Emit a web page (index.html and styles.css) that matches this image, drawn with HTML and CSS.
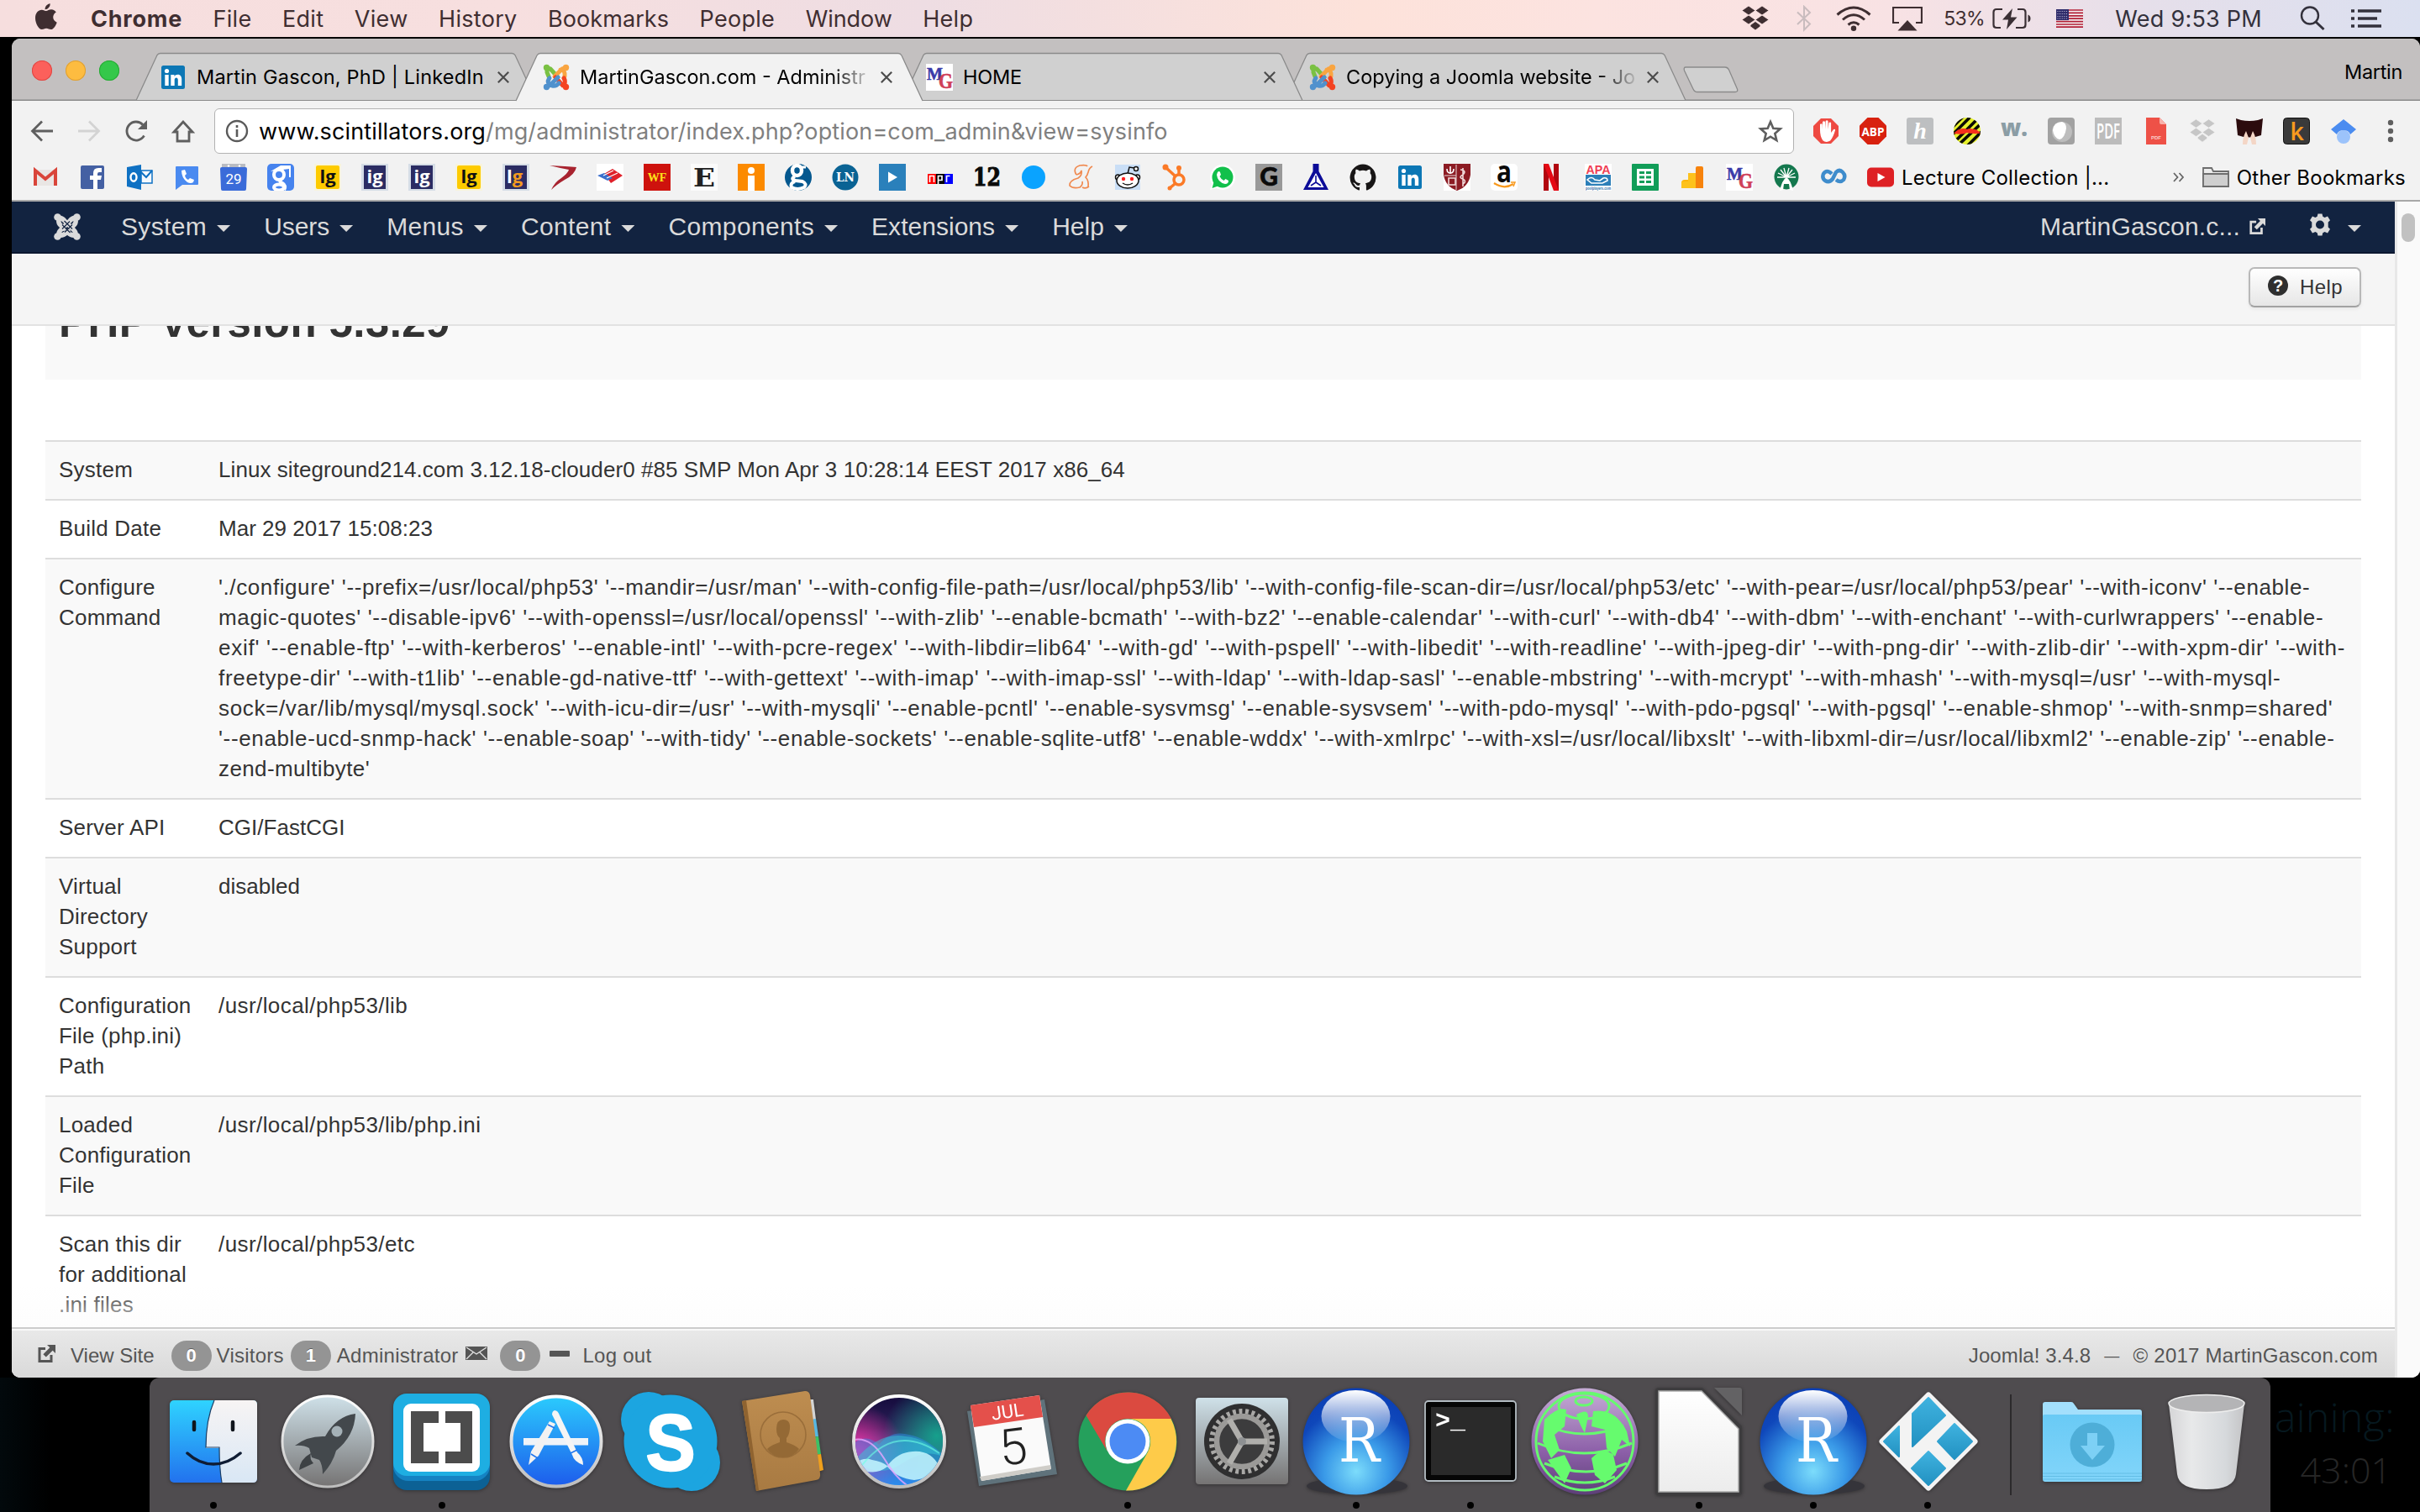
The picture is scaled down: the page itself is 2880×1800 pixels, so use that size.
FILE: index.html
```html
<!DOCTYPE html>
<html lang="en">
<head>
<meta charset="utf-8">
<title>MartinGascon.com - Administration</title>
<link rel="stylesheet" href="styles.css">
</head>
<body>
<svg width="0" height="0" class="defs" aria-hidden="true">
  <defs>
    <linearGradient id="gFinder" x1="0" y1="0" x2="0" y2="1"><stop offset="0" stop-color="#2fd3ff"/><stop offset="1" stop-color="#2272ee"/></linearGradient>
    <linearGradient id="gFace" x1="0" y1="0" x2="0" y2="1"><stop offset="0" stop-color="#f7f4f4"/><stop offset="1" stop-color="#d9e7f5"/></linearGradient>
    <linearGradient id="gSteel" x1="0" y1="0" x2="0" y2="1"><stop offset="0" stop-color="#cfe1e9"/><stop offset="1" stop-color="#757373"/></linearGradient>
    <linearGradient id="gRim" x1="0" y1="0" x2="0" y2="1"><stop offset="0" stop-color="#ffffff"/><stop offset="1" stop-color="#bdbdbd"/></linearGradient>
    <linearGradient id="gStore" x1="0" y1="0" x2="0" y2="1"><stop offset="0" stop-color="#2bcbfd"/><stop offset="1" stop-color="#1d5cec"/></linearGradient>
    <linearGradient id="gBook" x1="0" y1="0" x2="0" y2="1"><stop offset="0" stop-color="#be8d50"/><stop offset="1" stop-color="#a87a42"/></linearGradient>
    <linearGradient id="gSiri" x1="0" y1="0" x2="0" y2="1"><stop offset="0" stop-color="#140a3c"/><stop offset=".35" stop-color="#2b2058"/><stop offset=".6" stop-color="#3a4f8f"/><stop offset="1" stop-color="#2a8cf0"/></linearGradient>
    <radialGradient id="gPink" cx=".1" cy=".6" r=".45"><stop offset="0" stop-color="#ff2fa8"/><stop offset="1" stop-color="#ff2fa8" stop-opacity="0"/></radialGradient>
    <radialGradient id="gTeal" cx=".85" cy=".45" r=".5"><stop offset="0" stop-color="#16a08c"/><stop offset="1" stop-color="#16a08c" stop-opacity="0"/></radialGradient>
    <radialGradient id="gR" cx=".5" cy=".78" r=".75"><stop offset="0" stop-color="#7cdcfb"/><stop offset=".4" stop-color="#3a9ae8"/><stop offset=".8" stop-color="#0f47ba"/><stop offset="1" stop-color="#0b3fb5"/></radialGradient>
    <linearGradient id="gShine" x1="0" y1="0" x2="0" y2="1"><stop offset="0" stop-color="#fff"/><stop offset="1" stop-color="#fff" stop-opacity=".05"/></linearGradient>
    <linearGradient id="gGlobe" x1="0" y1="0" x2="0" y2="1"><stop offset="0" stop-color="#c6add6"/><stop offset=".6" stop-color="#8c5fa8"/><stop offset="1" stop-color="#5d3f78"/></linearGradient>
    <linearGradient id="gPage" x1="0" y1="0" x2="0" y2="1"><stop offset="0" stop-color="#ffffff"/><stop offset="1" stop-color="#ececec"/></linearGradient>
    <linearGradient id="gKodi" x1="0" y1="0" x2="0" y2="1"><stop offset="0" stop-color="#3fb2df"/><stop offset="1" stop-color="#2291c1"/></linearGradient>
    <linearGradient id="gFolder" x1="0" y1="0" x2="0" y2="1"><stop offset="0" stop-color="#69caf5"/><stop offset="1" stop-color="#82d5fa"/></linearGradient>
    <linearGradient id="gTrash" x1="0" y1="0" x2="1" y2="0"><stop offset="0" stop-color="#d5d5d7"/><stop offset=".3" stop-color="#e8e9ea"/><stop offset=".75" stop-color="#d6d9dc"/><stop offset="1" stop-color="#c4c4c6"/></linearGradient>
    <symbol id="joomla" viewBox="0 0 32 32">
      <g fill="none" stroke-width="5" stroke-linecap="round" stroke-linejoin="round">
        <path d="M5 5l4 1 9 10M5 4v6l2 5" stroke="#7ac143"/>
        <path d="M27 5l-4 1-9 9M21 7q6 0 5 8" stroke="#f9a541"/>
        <path d="M27 27l-3-1-9-10M26 24q1-4-1-7" stroke="#f44321"/>
        <path d="M5 27l3-1 10-10M8 17q-3 3-1 7M11 26q5 1 8-3" stroke="#5091cd"/>
      </g>
      <circle cx="4.500" cy="4.500" r="3.700" fill="#7ac143"/><circle cx="27.500" cy="4.500" r="3.700" fill="#f9a541"/><circle cx="27.500" cy="27.500" r="3.700" fill="#f44321"/><circle cx="4.500" cy="27.500" r="3.700" fill="#5091cd"/>
    </symbol>
    <symbol id="mg" viewBox="0 0 32 32"><rect width="32" height="32" fill="#fff"/><text x="1" y="19" font-family="Liberation Serif" font-weight="700" font-size="22" fill="#3a3aa8" stroke="#3a3aa8" stroke-width=".6" textLength="19" lengthAdjust="spacingAndGlyphs">M</text><text x="15" y="29" font-family="Liberation Serif" font-weight="700" font-size="25" fill="#cf4058" stroke="#cf4058" stroke-width=".6" textLength="17" lengthAdjust="spacingAndGlyphs">G</text></symbol>
    <symbol id="linkedin" viewBox="0 0 32 32"><rect x="2" y="2" width="28" height="28" rx="2.500" fill="#0c77b5"/><circle cx="8.500" cy="8.500" r="2.600" fill="#fff"/><path d="M6.300 13h4.400v13H6.300zM13.300 13h4.200v1.900c2-3.400 8.700-3.200 8.700 3.100v8h-4.400v-7c0-3.600-4.100-3.300-4.100 0v7h-4.400z" fill="#fff"/></symbol>
    <symbol id="dropbox" viewBox="0 0 34 32"><path d="M9 1l8 5.500L9 12 1 6.500zM25 1l8 5.500-8 5.500-8-5.500zM9 12l8 5.500L9 23l-8-5.500zM25 12l8 5.500-8 5.500-8-5.500zM17 19.500l6 4.300v1.700l-6 4.500-6-4.500v-1.700z" stroke="var(--gap)" stroke-width=".8"/></symbol>
    <symbol id="extlink" viewBox="0 0 22 22"><path d="M10 4.500H3v15h14V12" fill="none" stroke="currentColor" stroke-width="3"/><path d="M12 0h10v10l-3.300-3.300-7.900 7.900-3.400-3.400L15.300 3.300z" fill="currentColor"/></symbol>
    <symbol id="rstudio" viewBox="0 0 128 128"><ellipse cx="65" cy="117" rx="60" ry="10" fill="#35343a"/><circle cx="64" cy="64" r="63.500" fill="url(#gR)"/><ellipse cx="63.500" cy="34" rx="41" ry="31" fill="url(#gShine)"/><text x="43" y="88" font-family="DejaVu Serif" font-size="73" fill="#fff" textLength="49" lengthAdjust="spacingAndGlyphs">R</text></symbol>
    <symbol id="ig" viewBox="0 0 32 32"><rect width="32" height="32" fill="#d5dde6"/><rect x="3" y="2" width="26" height="28" fill="#2b2c63"/><text x="16" y="23" text-anchor="middle" font-family="Open Sans" font-weight="700" font-size="22" fill="#fff">ig</text></symbol>
    <symbol id="igy" viewBox="0 0 32 32"><rect width="32" height="32" fill="#f8f4dc"/><rect x="2" y="2" width="28" height="28" rx="2" fill="#fecb00"/><text x="16" y="23" text-anchor="middle" font-family="Open Sans" font-weight="700" font-size="22" fill="#111">lg</text></symbol>
  </defs>
</svg>

<header class="menubar">
  <svg class="apple" viewBox="0 0 28 34"><path d="M19 0c.4 4-3 7.600-6.500 7.500C12.200 3.800 15.500.4 19 0zM14 9.500c1.700 0 3.500-1.800 6.500-1.800 2.700 0 4.900 1.500 6.200 3.500-5.700 3.400-4.700 10.800 1 13-1.500 4.500-4.600 9-7.700 9-2.500 0-3-1.400-5.800-1.400s-3.500 1.400-5.800 1.400C4.600 33.200 0 25.500 0 18.500 0 11.700 4 8 8.200 8c2.600 0 4.400 1.500 5.800 1.500z"/></svg>
  <nav class="menus"><b class="m1">Chrome</b><span>File</span><span>Edit</span><span>View</span><span>History</span><span class="m6">Bookmarks</span><span>People</span><span class="m8">Window</span><span>Help</span></nav>
  <div class="status-items">
    <svg class="i-drop" viewBox="0 0 34 32"><use href="#dropbox"/></svg>
    <svg class="i-bt" viewBox="0 0 18 32"><path d="M1 8.500l15 14-7 7V2l7 7L1 23" fill="none" stroke="#c9bcbe" stroke-width="2"/></svg>
    <svg class="i-wifi" viewBox="0 0 42 30"><g fill="none" stroke="#3e2e31" stroke-width="3"><path d="M1.500 10.500q19.500-17 39 0"/><path d="M8 16.500q13-11.500 26 0"/><path d="M14.500 22.500q6.500-5.500 13 0"/></g><circle cx="21" cy="26.800" r="3.200" fill="#3e2e31"/></svg>
    <svg class="i-air" viewBox="0 0 36 29"><path d="M8 19H1V1h34v18h-7" fill="none" stroke="#3e2e31" stroke-width="2.200"/><path d="M18 16l11.500 12.500h-23z" fill="#3e2e31"/></svg>
    <span class="battery-level">53%</span>
    <svg class="i-bat" viewBox="0 0 46 28"><path d="M12 3H5Q1.500 3 1.500 6.500v15Q1.500 25 5 25h5M30 3h6q3.500 0 3.500 3.500v15q0 3.500-3.500 3.500h-8" fill="none" stroke="#3a2f34" stroke-width="2.200"/><path d="M42.500 9.500q3 1 3 4.500t-3 4.500z" fill="#3a2f34"/><path d="M24 2l-12 13.500h7L17 27l12.500-14.500h-7.500z" fill="#3a2f34"/></svg>
    <svg class="i-flag" viewBox="0 0 32 22"><rect width="32" height="22" fill="#f3eef0"/><path d="M0 1h32M0 4.400h32M0 7.800h32M0 11.200h32M0 14.600h32M0 18h32M0 21.200h32" stroke="#b21f36" stroke-width="1.700"/><rect width="15" height="13" fill="#2f2c6b"/><path d="M1.500 2.500h13M1.500 5.500h13M1.500 8.500h13M1.500 11h13" stroke="#c9c6dd" stroke-width="1" stroke-dasharray="1 1.600"/></svg>
    <span class="clock">Wed 9:53 PM</span>
    <svg class="i-find" viewBox="0 0 30 30"><circle cx="12" cy="11.500" r="10" fill="none" stroke="#33313c" stroke-width="2.400"/><path d="M19 19l9.500 9" stroke="#33313c" stroke-width="3"/></svg>
    <svg class="i-list" viewBox="0 0 36 22"><path d="M0 2h4M0 11h4M0 20h4M8 2h28M8 11h23M8 20h28" stroke="#33313c" stroke-width="3.600"/></svg>
  </div>
</header>

<main class="window">
  <div class="tabstrip">
    <div class="lights"><i class="red"></i><i class="yellow"></i><i class="green"></i></div>
    <div class="tabs">
      <div class="tab"><svg class="shape" viewBox="0 0 484 57"><path d="M0 57L25 3Q26.500.5 29 .5H455Q457.500.5 459 3L484 57"/></svg><svg class="fav"><use href="#linkedin"/></svg><span class="label t1">Martin Gascon, PhD | LinkedIn</span><svg class="close" viewBox="0 0 14 14"><path d="M.8.800l12.400 12.400M13.200.800L.8 13.200"/></svg></div>
      <div class="tab active"><svg class="shape" viewBox="0 0 484 57"><path d="M0 57L25 3Q26.500.5 29 .5H455Q457.500.5 459 3L484 57"/></svg><svg class="fav"><use href="#joomla"/></svg><span class="label fade">MartinGascon.com - Administr</span><svg class="close" viewBox="0 0 14 14"><path d="M.8.800l12.400 12.400M13.200.800L.8 13.200"/></svg></div>
      <div class="tab third"><svg class="shape" viewBox="0 0 484 57"><path d="M0 57L25 3Q26.500.5 29 .5H455Q457.500.5 459 3L484 57"/></svg><svg class="fav"><use href="#mg"/></svg><span class="label t3">HOME</span><svg class="close" viewBox="0 0 14 14"><path d="M.8.800l12.400 12.400M13.200.800L.8 13.200"/></svg></div>
      <div class="tab"><svg class="shape" viewBox="0 0 484 57"><path d="M0 57L25 3Q26.500.5 29 .5H455Q457.500.5 459 3L484 57"/></svg><svg class="fav"><use href="#joomla"/></svg><span class="label fade">Copying a Joomla website - Jo</span><svg class="close" viewBox="0 0 14 14"><path d="M.8.800l12.400 12.400M13.200.800L.8 13.200"/></svg></div>
    </div>
    <svg class="newtab" viewBox="0 0 66 32"><path d="M3 1H50Q53 1 54.500 4L64.500 27Q65.500 30.500 62 30.500H17Q13.500 30.500 12 27L1.500 5Q.5 1 3 1z"/></svg>
    <span class="user">Martin</span>
  </div>

  <div class="toolbar">
    <svg class="tb back" viewBox="0 0 28 26"><path d="M14 1.500L2.500 13 14 24.500M2.500 13H27" fill="none" stroke="#5f5f5f" stroke-width="2.800"/></svg>
    <svg class="tb fwd" viewBox="0 0 28 26"><path d="M14 1.500L25.500 13 14 24.500M25.500 13H1" fill="none" stroke="#d3d3d3" stroke-width="2.800"/></svg>
    <svg class="tb reload" viewBox="0 0 28 28"><path d="M23.500 19.500A11 11 0 1 1 22 6.500" fill="none" stroke="#5f5f5f" stroke-width="2.800"/><path d="M27 1v11H16z" fill="#5f5f5f"/></svg>
    <svg class="tb home" viewBox="0 0 28 28"><path d="M14 3L3 15h4v11h14V15h4z" fill="none" stroke="#5f5f5f" stroke-width="2.800"/></svg>
    <div class="omnibox">
      <svg class="info" viewBox="0 0 28 28"><circle cx="14" cy="14" r="12" fill="none" stroke="#5a5a5a" stroke-width="2.400"/><path d="M14 12v9M14 7v3" stroke="#5a5a5a" stroke-width="2.600"/></svg>
      <div class="url"><span class="host">www.scintillators.org</span><span class="path">/mg/administrator/index.php?option=com_admin&amp;view=sysinfo</span></div>
      <svg class="star" viewBox="0 0 30 28"><path d="M15 3l3.300 7.700 8.400.7-6.400 5.500 2 8.200-7.300-4.400-7.300 4.400 2-8.200-6.400-5.500 8.400-.7z" fill="none" stroke="#5f5f5f" stroke-width="2.600"/></svg>
    </div>
    <div class="exts">
      <svg viewBox="0 0 32 32"><path d="M10 1h12l9 9v12l-9 9H10l-9-9V10z" fill="#ee4a42"/><path d="M9 15V8q1.500-1.500 2.500 0v6l.5-9q1.500-1.500 3 0v9l.7-10q1.500-1.300 2.800 0V14l1-8q1.500-1.200 2.600 0V18l3-4q2-.8 2 .7-2.500 9-6 12.800-5 3-9-.5Q9 22 9 15z" fill="#fff"/></svg>
      <svg viewBox="0 0 32 32"><path d="M9.500 0h13l9.500 9.500v13L22.500 32h-13L0 22.500v-13z" fill="#d8210f"/><text x="16" y="21.500" text-anchor="middle" font-family="Open Sans" font-weight="700" font-size="15" textLength="27" lengthAdjust="spacingAndGlyphs" fill="#fff">ABP</text></svg>
      <svg viewBox="0 0 32 32"><rect width="32" height="32" rx="3" fill="#bdbfc1"/><text x="16" y="25" text-anchor="middle" font-family="Liberation Serif" font-style="italic" font-weight="700" font-size="28" fill="#fff">h</text></svg>
      <svg viewBox="0 0 32 32"><clipPath id="cb"><circle cx="16" cy="16" r="16"/></clipPath><g clip-path="url(#cb)"><rect width="32" height="32" fill="#e6f02c"/><path d="M-4 14L14-4M-2 21L22-3M4 26L30 0M2 36L36 4M12 38L38 12M20 38L40 20" stroke="#0b0b05" stroke-width="3.600"/><path d="M0 19q5-6 11-6 3-.5 5 1 3-1.500 6-.5 6 0 10 5-5 1-8 .5-5 0-8-1-5 3-16 1z" fill="#f7301d"/></g></svg>
      <svg viewBox="0 0 32 32"><text x="0" y="22" font-family="Open Sans" font-weight="800" font-size="28" textLength="32" lengthAdjust="spacingAndGlyphs" fill="#8b9da5">w.</text></svg>
      <svg viewBox="0 0 32 32"><rect width="32" height="32" rx="4" fill="#a2a2a2"/><circle cx="17" cy="17" r="12" fill="#bdbdbd"/><path d="M6 15q1-10 11-10 5 1 5 8-2 12-8 13-7-2-8-11z" fill="#fff"/></svg>
      <svg viewBox="0 0 32 32"><rect width="32" height="32" fill="#bcbcbc"/><text x="16" y="25" text-anchor="middle" font-family="Open Sans" font-weight="600" font-size="25" textLength="28" lengthAdjust="spacingAndGlyphs" fill="#fff">PDF</text></svg>
      <svg viewBox="0 0 32 32"><path d="M5 0h16l8 8v24H5z" fill="#ee5147"/><path d="M21 0l8 8h-6q-2 0-2-2z" fill="#f9b1aa"/><text x="17" y="26" text-anchor="middle" font-family="Liberation Sans" font-weight="700" font-size="6" fill="#fbd0cc">PDF</text></svg>
      <svg viewBox="0 0 34 32" class="e-drop"><use href="#dropbox"/></svg>
      <svg viewBox="0 0 32 32"><path d="M0 1l6 2q10 2 20 0l6-2-2 20q-14 5-28 0z" fill="#2b0b0d"/><path d="M8 32q0-8 3-14l1-2 3 8-2 8zM24 32q0-8-3-14l-1-2-3 8 2 8z" fill="#f4d6c6"/></svg>
      <svg viewBox="0 0 32 32"><rect x=".5" y=".5" width="31" height="31" rx="4" fill="#3a3a3a" stroke="#111"/><text x="16.500" y="27" text-anchor="middle" font-family="Open Sans" font-weight="600" font-size="29" fill="#f79a1e">k</text></svg>
      <svg viewBox="0 0 32 32"><circle cx="16" cy="23" r="8" fill="#9cc3fb"/><path d="M16 2l15 12-7 6q-2-5-8-5t-8 5l-7-6z" fill="#4b8cf0"/></svg>
      <svg viewBox="0 0 32 32"><g fill="#5f5f5f"><circle cx="16" cy="6" r="3.200"/><circle cx="16" cy="16" r="3.200"/><circle cx="16" cy="26" r="3.200"/></g></svg>
    </div>
  </div>

  <div class="bookmarks">
    <svg viewBox="0 0 32 32"><path d="M4 7h24v19H4z" fill="#e9e6e4"/><path d="M4 26V8l12 10L28 8v18" fill="none" stroke="#d9453a" stroke-width="4"/></svg>
    <svg viewBox="0 0 32 32"><rect x="2" y="2" width="28" height="28" rx="2" fill="#4460a3"/><path d="M17 30V19h-4v-5h4v-3q0-6 6-6h4v5h-3q-2 0-2 2v2h5l-1 5h-4v11z" fill="#fff"/></svg>
    <svg viewBox="0 0 32 32"><path d="M1 4l17-3v30L1 27z" fill="#0f71c3"/><rect x="18" y="8" width="13" height="15" fill="#f5f9fd" stroke="#0f71c3" stroke-width="1.500"/><path d="M18 10l6 6 7-8" fill="none" stroke="#0f71c3" stroke-width="2"/><ellipse cx="9" cy="16" rx="3.500" ry="4.700" fill="none" stroke="#fff" stroke-width="2.400"/></svg>
    <svg viewBox="0 0 32 32"><path d="M4 3h25q1 0 1 1v20q0 1-1 1H11l-8 6V4q0-1 1-1z" fill="#4a8af0"/><path d="M10 8l4-1 2 5-2 2q1 4 4 5l2-2 5 2-1 3q-3 2-7 0-7-5-7-14z" fill="#fff"/></svg>
    <svg viewBox="0 0 32 32"><path d="M2 0h28v7H2z" fill="#b9bcc2"/><path d="M0 6q0-2 2-2h28q2 0 2 2l-1 24q0 2-2 2H3q-2 0-2-2z" fill="#3a6bd9"/><circle cx="10" cy="2.500" r="1.300" fill="#fff"/><circle cx="23" cy="2.500" r="1.300" fill="#fff"/><text x="16" y="24" text-anchor="middle" font-family="Roboto" font-size="17" fill="#fff">29</text></svg>
    <svg viewBox="0 0 32 32"><rect width="32" height="32" rx="5" fill="#4683ee"/><g fill="none" stroke="#fff" stroke-width="4"><circle cx="14" cy="13" r="6"/><path d="M17 18q-4 3 1 5 5 3 2 8"/><ellipse cx="14" cy="28" rx="6" ry="3.500"/></g><path d="M4 9l12-7h12v14h-2V6z" fill="#fff"/></svg>
    <svg><use href="#igy"/></svg><svg><use href="#ig"/></svg><svg><use href="#ig"/></svg><svg><use href="#igy"/></svg>
    <svg viewBox="0 0 32 32"><rect width="32" height="32" fill="#d5dde6"/><rect x="3" y="2" width="26" height="28" fill="#2b2c63"/><text x="5" y="23" font-family="Open Sans" font-weight="700" font-size="22" fill="#fff">l<tspan fill="#f39a1f">g</tspan></text></svg>
    <svg viewBox="0 0 32 32"><path d="M0 2q20 1 32 2-2 9-14 15Q8 25 2 31q4-9 12-14 8-6 9-10Q12 5 0 2z" fill="#a8232f"/></svg>
    <svg viewBox="0 0 32 32"><rect width="32" height="32" fill="#fff"/><path d="M9 12l10-6 12 8-14 9z" fill="#e0202a"/><path d="M1 14l8-3 10 6-6 3z" fill="#3b6fcb"/><path d="M8 14l12-6M12 17l13-6" stroke="#fff" stroke-width="1.200"/></svg>
    <svg viewBox="0 0 32 32"><rect width="32" height="32" fill="#ce120d"/><text x="16" y="21" text-anchor="middle" font-family="Liberation Serif" font-weight="700" font-size="14" fill="#fde21a">WF</text></svg>
    <svg viewBox="0 0 32 32"><rect width="32" height="32" fill="#fbfbfb"/><text x="16" y="26.500" text-anchor="middle" font-family="DejaVu Serif" font-weight="700" font-size="30" textLength="26" lengthAdjust="spacingAndGlyphs" fill="#222">E</text></svg>
    <svg viewBox="0 0 32 32"><rect width="32" height="32" fill="#fc8a00"/><circle cx="16" cy="8" r="4" fill="#fff"/><path d="M12 14h8v18h-8z" fill="#fff"/></svg>
    <svg viewBox="0 0 32 32"><circle cx="16" cy="16" r="16" fill="#04588f"/><g fill="none" stroke="#fff"><ellipse cx="14.500" cy="8" rx="5.500" ry="6" stroke-width="4.500"/><path d="M12 15q-6 3 1 5l8 1q6 3 2 7-8 4-15 0-2-5 4-7" stroke-width="4"/><path d="M18 4h7" stroke-width="3"/></g></svg>
    <svg viewBox="0 0 32 32"><circle cx="16" cy="16" r="15.500" fill="#0a6394"/><text x="16" y="21" text-anchor="middle" font-family="DejaVu Serif" font-weight="700" font-size="14" fill="#fff" textLength="22" lengthAdjust="spacingAndGlyphs">LN</text></svg>
    <svg viewBox="0 0 32 32"><rect width="32" height="32" fill="#2a80bb"/><path d="M11 9.500l11 6.500-11 6.500z" fill="#fff"/></svg>
    <svg viewBox="0 0 32 32"><path d="M2 12h10v12H2z" fill="#f00"/><path d="M12 12h10v12H12z" fill="#000"/><path d="M22 12h10v12H22z" fill="#00f"/><g fill="none" stroke="#fff" stroke-width="1.700"><path d="M4.500 22v-7.500h5V22M14.500 24v-9.500h4.500v5h-4M24.500 22v-7.500h4"/></g></svg>
    <svg viewBox="0 0 32 32"><text x="0" y="26" font-family="DejaVu Serif" font-weight="700" font-size="29" textLength="33" lengthAdjust="spacingAndGlyphs" fill="#0a0a0a" stroke="#0a0a0a" stroke-width="1">12</text></svg>
    <svg viewBox="0 0 32 32"><circle cx="16" cy="16" r="14" fill="#0aa3ff"/></svg>
    <svg viewBox="0 0 32 32"><g fill="none" stroke="#f08a50" stroke-width="1.700"><path d="M30 3q-4 2-5 7-1 4-3 6 4 4 3 12M11 13q-5-8 4-11 8-1 9 1"/><path d="M11 13q5-1 6-5 1 6-4 9Q2 20 3 26q4 4 12 2 4-3 3-7M18 28q4 2 8-1"/></g></svg>
    <svg viewBox="0 0 32 32"><rect x="1" y="1" width="30" height="30" fill="#c9def6"/><g stroke="#111" stroke-width="1.500" fill="#fff"><path d="M16 12l2-8 6 1" fill="none"/><circle cx="26" cy="6" r="2.500"/><circle cx="4.500" cy="16" r="3"/><circle cx="27.500" cy="16" r="3"/><ellipse cx="16" cy="20" rx="13" ry="9"/></g><circle cx="11" cy="18" r="2.200" fill="#f22"/><circle cx="21" cy="18" r="2.200" fill="#f22"/><path d="M10 23q6 4 12 0" fill="none" stroke="#111" stroke-width="1.500"/></svg>
    <svg viewBox="0 0 32 32"><g stroke="#fb7a27" fill="none" stroke-width="3.500"><circle cx="21" cy="19" r="6"/><path d="M21 4v9M5 4l12 11M16 24l-6 5"/></g><g fill="#fb7a27"><circle cx="5" cy="4" r="3.500"/><circle cx="21" cy="5" r="3"/><circle cx="10" cy="29" r="2.500"/></g></svg>
    <svg viewBox="0 0 32 32"><circle cx="17" cy="16" r="15" fill="#fff"/><path d="M2 31l3-9 8 6z" fill="#fff"/><circle cx="17" cy="16" r="12.500" fill="#12c04b"/><path d="M4.500 29l2-7 5 4.500z" fill="#12c04b"/><path d="M11 10q2-2 3 0l1 3-1.500 2q2 4 5 5l2-2 3.500 2q0 4-4 4-9-2-10-11z" fill="#fff"/></svg>
    <svg viewBox="0 0 32 32"><rect width="32" height="32" fill="#999"/><text x="16" y="26" text-anchor="middle" font-family="Lato" font-weight="900" font-size="30" fill="#0b0b0b" stroke="#0b0b0b" stroke-width=".6">G</text></svg>
    <svg viewBox="0 0 32 32"><path d="M12.500 0h7v9L31 31H1L12.500 9z" fill="#0c0c98"/><path d="M16 11l9.500 17h-19z" fill="#fff"/><path d="M16 14v8l-6 4M16 22l6 4" fill="none" stroke="#0c0c98" stroke-width="1.600"/></svg>
    <svg viewBox="0 0 32 32"><path d="M16 .5A16 16 0 0 0 11 31.500c.8.100 1-.3 1-.8v-3c-4.500 1-5.400-2-5.400-2-.7-1.800-1.800-2.300-1.800-2.300-1.400-1 .1-1 .1-1 1.600.1 2.500 1.700 2.500 1.700 1.400 2.500 3.800 1.800 4.700 1.300.1-1 .6-1.700 1-2.100-3.500-.4-7.300-1.800-7.300-8 0-1.700.6-3.200 1.700-4.300-.2-.4-.7-2 .1-4.200 0 0 1.300-.4 4.400 1.600a15 15 0 0 1 8 0c3-2 4.400-1.600 4.400-1.600.8 2.200.3 3.800.1 4.200a6.200 6.200 0 0 1 1.700 4.300c0 6.200-3.800 7.500-7.400 7.900.6.500 1.100 1.500 1.100 3v4.500c0 .4.300.9 1.100.8A16 16 0 0 0 16 .5z" fill="#181616"/></svg>
    <svg><use href="#linkedin"/></svg>
    <svg viewBox="0 0 32 32"><rect width="32" height="32" fill="#fff"/><path d="M0 0h32v13q-2 14-16 19Q2 27 0 13z" fill="#8c1b23"/><path d="M1 14h14V1M15 14v17" fill="none" stroke="#e8d6d6" stroke-width="1"/><path d="M8 3v9M4 6q0 5 4 5t4-5" fill="none" stroke="#fff" stroke-width="1.600"/><path d="M23 5v22M20 7q8 1 3 6-6 3 0 5 5 3 0 6" fill="none" stroke="#f0dada" stroke-width="1.600"/><path d="M6 17h8v8H6z" fill="none" stroke="#f0dada" stroke-width="1.600"/></svg>
    <svg viewBox="0 0 32 32"><rect width="32" height="32" rx="5" fill="#fff"/><text x="16" y="22" text-anchor="middle" font-family="Open Sans" font-weight="700" font-size="35" textLength="18" lengthAdjust="spacingAndGlyphs" fill="#0a0a0a">a</text><path d="M4 23q12 8 23 1" fill="none" stroke="#f8991d" stroke-width="2.200"/><path d="M24 22h5l-2 5" fill="none" stroke="#f8991d" stroke-width="1.500"/></svg>
    <svg viewBox="0 0 32 32"><path d="M7 0h6v32H7zM19 0h6v32h-6z" fill="#b1060f"/><path d="M7 0h6l12 32h-6z" fill="#e50914"/></svg>
    <svg viewBox="0 0 32 32"><rect width="32" height="32" fill="#fff"/><text x="16" y="12" text-anchor="middle" font-family="Liberation Sans" font-weight="700" font-size="15" textLength="29" lengthAdjust="spacingAndGlyphs" fill="#ef4054">APA</text><path d="M1 13h30v13H1z" fill="#2c7fb8"/><path d="M3 19q5-5 9 0l6 1 4-3q5-1 5 3l-6 3H8z" fill="none" stroke="#fff" stroke-width="1.600"/><text x="16" y="31" text-anchor="middle" font-family="Liberation Sans" font-weight="700" font-size="5" textLength="30" lengthAdjust="spacingAndGlyphs" fill="#2c6fa8">poolplayers.com</text></svg>
    <svg viewBox="0 0 32 32"><rect width="32" height="32" rx="1" fill="#119d58"/><path d="M6 6h20v20H6z" fill="#fff"/><path d="M9 9h6v3H9zM17 9h6v3h-6zM9 14.500h6v3H9zM17 14.500h6v3h-6zM9 20h6v3H9zM17 20h6v3h-6z" fill="#119d58"/></svg>
    <svg viewBox="0 0 32 32"><path d="M20 5q0-2 2-2h5q2 0 2 2v24h-9z" fill="#f7830c"/><path d="M11 13q0-2 2-2h7v18h-9z" fill="#fdb50a"/><path d="M3 23q0-4 4-4h4v10H5q-2 0-2-2z" fill="#fdb50a"/><path d="M11 11h9v18H3v-8h8z" fill="#fdc21c"/></svg>
    <svg><use href="#mg"/></svg>
    <svg viewBox="0 0 32 32"><ellipse cx="16" cy="15.500" rx="14.500" ry="15" fill="#14784e"/><path d="M16 16L6 11M16 16L9 7M16 16L13 5M16 16L19 5M16 16L23 7M16 16L26 11M16 16L5 16M16 16L27 16" stroke="#fff" stroke-width="1.300"/><path d="M8 32q3-13 8-16 5 3 8 16l-4-1-1-7h-6l-1 7z" fill="#fff"/></svg>
    <svg viewBox="0 0 32 32"><g fill="none" stroke="#3e8ccc" stroke-width="4.500"><path d="M14 12q-6-6-10 0-2 5 2 8 5 3 9-2l4-8q4-4 8 0 4 4 1 9-4 4-9 0"/></g></svg>
    <div class="bm-text"><svg viewBox="0 0 32 32"><rect y="4.500" width="32" height="23" rx="5" fill="#de2024"/><path d="M12.500 11l9 5-9 5z" fill="#fff"/></svg><span>Lecture Collection |...</span></div>
    <div class="bm-text other"><svg class="chev" viewBox="0 0 14 12"><path d="M1 1l4.500 5L1 11M7.500 1L12 6l-4.500 5" fill="none" stroke="#666" stroke-width="1.800"/></svg><svg viewBox="0 0 32 26"><path d="M1 24V2h10l2 4h18v18z" fill="#ececec" stroke="#6e6e6e" stroke-width="1.800"/><path d="M1 9h30v15H1z" fill="#cfcfcf" stroke="#6e6e6e" stroke-width="1.800"/></svg><span>Other Bookmarks</span></div>
  </div>

  <div class="viewport">
    <div class="page">
      <nav class="navbar">
        <svg class="jlogo" viewBox="0 0 32 32"><g fill="none" stroke="#dadada" stroke-width="5.500" stroke-linecap="round"><path d="M5 5q5 0 8 4l10 10q4 4 3 7M27 5q-5 0-8 4L9 19q-4 4-3 7M6 7q-1 5 3 8l3 3M26 7q1 5-3 8M6 26q5 1 9-3l2-2M26 26q-5 1-9-3"/></g><path d="M10 13.500l9.500 9.500M13 9.500l3 3M22 18.500L12.500 9M22 13.500L13 22.500M19 9.500l-9 9" stroke="#122340" stroke-width="1.100"/><g fill="#dadada"><circle cx="4.500" cy="4.500" r="4.300"/><circle cx="27.500" cy="4.500" r="4.300"/><circle cx="27.500" cy="27.500" r="4.300"/><circle cx="4.500" cy="27.500" r="4.300"/></g></svg>
        <div class="nav-items">
          <a>System<i class="caret"></i></a><a class="users">Users<i class="caret"></i></a><a>Menus<i class="caret"></i></a><a>Content<i class="caret"></i></a><a>Components<i class="caret"></i></a><a class="tight">Extensions<i class="caret"></i></a><a class="tight">Help<i class="caret"></i></a>
        </div>
        <div class="nav-right"><span>MartinGascon.c...</span><svg class="nx" viewBox="0 0 22 22"><use href="#extlink"/></svg><svg class="gear" viewBox="0 0 26 26"><path d="M10.500 0h5l.8 3.200 2.300 1.200 3.400-1.300 3 4.600-2.300 2.400v5.800l2.300 2.400-3 4.600-3.400-1.300-2.300 1.200-.8 3.200h-5l-.8-3.200-2.300-1.200L4 22.900l-3-4.600 2.300-2.400v-5.800L1 7.700l3-4.600 3.400 1.300 2.300-1.200z" fill="#dadada"/><circle cx="13" cy="13" r="5" fill="#122340"/></svg><i class="caret"></i></div>
      </nav>
      <div class="subhead"><button class="help"><svg viewBox="0 0 24 24"><circle cx="12" cy="12" r="12" fill="#2f2f2f"/><text x="12" y="19" text-anchor="middle" font-family="Liberation Sans" font-weight="700" font-size="20" fill="#fff">?</text></svg><span>Help</span></button></div>
      <section class="content">
        <h1>PHP Version 5.3.29</h1>
        <table class="info-table">
          <tr><td>System</td><td class="sys">Linux siteground214.com 3.12.18-clouder0 #85 SMP Mon Apr 3 10:28:14 EEST 2017 x86_64</td></tr>
          <tr><td>Build Date</td><td class="plain">Mar 29 2017 15:08:23</td></tr>
          <tr><td>Configure<br>Command</td><td><span class="c1">'./configure' '--prefix=/usr/local/php53' '--mandir=/usr/man' '--with-config-file-path=/usr/local/php53/lib' '--with-config-file-scan-dir=/usr/local/php53/etc' '--with-pear=/usr/local/php53/pear' '--with-iconv' '--enable-</span><br><span class="c2">magic-quotes' '--disable-ipv6' '--with-openssl=/usr/local/openssl' '--with-zlib' '--enable-bcmath' '--with-bz2' '--enable-calendar' '--with-curl' '--with-db4' '--with-dbm' '--with-enchant' '--with-curlwrappers' '--enable-</span><br><span class="c3">exif' '--enable-ftp' '--with-kerberos' '--enable-intl' '--with-pcre-regex' '--with-libdir=lib64' '--with-gd' '--with-pspell' '--with-libedit' '--with-readline' '--with-jpeg-dir' '--with-png-dir' '--with-zlib-dir' '--with-xpm-dir' '--with-</span><br><span class="c4">freetype-dir' '--with-t1lib' '--enable-gd-native-ttf' '--with-gettext' '--with-imap' '--with-imap-ssl' '--with-ldap' '--with-ldap-sasl' '--enable-mbstring' '--with-mcrypt' '--with-mhash' '--with-mysql=/usr' '--with-mysql-</span><br><span class="c5">sock=/var/lib/mysql/mysql.sock' '--with-icu-dir=/usr' '--with-mysqli' '--enable-pcntl' '--enable-sysvmsg' '--enable-sysvsem' '--with-pdo-mysql' '--with-pdo-pgsql' '--with-pgsql' '--enable-shmop' '--with-snmp=shared'</span><br><span class="c6">'--enable-ucd-snmp-hack' '--enable-soap' '--with-tidy' '--enable-sockets' '--enable-sqlite-utf8' '--enable-wddx' '--with-xmlrpc' '--with-xsl=/usr/local/libxslt' '--with-libxml-dir=/usr/local/libxml2' '--enable-zip' '--enable-</span><br><span class="c7">zend-multibyte'</span></td></tr>
          <tr><td>Server API</td><td class="plain">CGI/FastCGI</td></tr>
          <tr><td>Virtual<br>Directory<br>Support</td><td class="plain">disabled</td></tr>
          <tr><td>Configuration<br>File (php.ini)<br>Path</td><td>/usr/local/php53/lib</td></tr>
          <tr><td>Loaded<br>Configuration<br>File</td><td>/usr/local/php53/lib/php.ini</td></tr>
          <tr><td>Scan this dir<br>for additional<br>.ini files</td><td>/usr/local/php53/etc</td></tr>
        </table>
        <div class="bottom-fade"></div>
      </section>
      <footer class="statusbar">
        <svg class="sx" viewBox="0 0 22 22"><use href="#extlink"/></svg><span class="s1">View Site</span><b class="pill p1">0</b><span>Visitors</span><b class="pill p2">1</b><span>Administrator</span>
        <svg class="mail" viewBox="0 0 26 16"><rect width="26" height="16" fill="#555"/><path d="M1 1l12 8L25 1M1 15l8-8M25 15l-8-8" fill="none" stroke="#e4e4e4" stroke-width="1.300"/></svg><b class="pill">0</b><i class="minus"></i><span>Log out</span>
        <span class="copy"><span class="ver">Joomla! 3.4.8</span><span class="dash">—</span><span>© 2017 MartinGascon.com</span></span>
      </footer>
    </div>
    <div class="scrollbar"><i></i></div>
  </div>
</main>

<div class="desktop">
  <div class="dock">
    <div class="app on"><svg viewBox="0 0 128 128"><rect x="12" y="15" width="104" height="98" rx="5" fill="url(#gFinder)"/><path d="M65 15h46q5 0 5 5v88q0 5-5 5H74q-3-18-3-41H55q0-34 10-57z" fill="url(#gFace)"/><path d="M65 15Q55 38 55 71h16q0 25 3 42" fill="none" stroke="#1b3f66" stroke-width="1.200"/><path d="M41 41v9M87 41v9" stroke="#10151c" stroke-width="4.500" stroke-linecap="round"/><path d="M33 78q14 13 31 13t32-13" fill="none" stroke="#0f1c33" stroke-width="3.500" stroke-linecap="round"/></svg></div>
    <div class="app"><svg viewBox="0 0 128 128"><circle cx="64" cy="64" r="54" fill="url(#gSteel)" stroke="url(#gRim)" stroke-width="3"/><path d="M97 31Q74 34 61 58 40 57 25 69q10-1 17 3l3 11 9 3q4 6 4 17 12-13 16-28 22-18 23-44z" fill="#43484c"/><path d="M44 78q-13 7-14 20l17-8q-5-5-3-12z" fill="#3d4144"/><circle cx="75" cy="52" r="6.500" fill="#a5b1b7"/></svg></div>
    <div class="app on"><svg viewBox="0 0 128 128"><rect x="6" y="17" width="115" height="105" rx="16" fill="#0c6195"/><rect x="6" y="10" width="115" height="101" rx="18" fill="#1583c3"/><rect x="6" y="7" width="115" height="98" rx="16" fill="#1eaee2"/><rect x="18" y="19" width="91" height="81" rx="9" fill="#fff"/><path d="M27 28h33v14H42v34h18v14H27zM68 28h32v62H68V76h18V42H68z" fill="#4c4c4c"/></svg></div>
    <div class="app"><svg viewBox="0 0 128 128"><circle cx="64" cy="64" r="53.500" fill="url(#gStore)" stroke="url(#gRim)" stroke-width="4"/><rect x="25" y="60" width="77" height="8.500" fill="#eef3f8"/><path d="M56 40l7 3-20 38-12 11 3-16z" fill="#f2f2f2"/><path d="M62 27q4 0 6 6l21 44q7 6 7 15-11-4-13-12L59 32q0-4 3-5z" fill="#f5f5f5"/><path d="M54 44l8 4M34 79l8 5M81 78l8-4" stroke="#1f76ef" stroke-width="1.500"/></svg></div>
    <div class="app"><svg viewBox="0 0 128 128"><g fill="#1ca5e0"><circle cx="38" cy="38" r="33"/><circle cx="89" cy="89" r="34"/><circle cx="64" cy="64" r="55.500"/></g><text x="64" y="98" text-anchor="middle" font-family="Liberation Sans" font-weight="700" font-size="94" fill="#fff" stroke="#fff" stroke-width="2.500" stroke-linejoin="round" textLength="59" lengthAdjust="spacingAndGlyphs">S</text></svg></div>
    <div class="app"><svg viewBox="0 0 128 128"><path d="M92 14l6 0 3 24-6 1z" fill="#d4d4d4"/><path d="M94 38l7-1 3 21-7 1z" fill="#57b7e2"/><path d="M96 59l8-1 3 21-7 1z" fill="#3dc165"/><path d="M99 80l8-1 3 19-7 2z" fill="#f0a01c"/><path d="M13 16L88 4q5 0 6 5l12 93q1 7-5 8l-71 13z" fill="url(#gBook)"/><path d="M13 16l5-1 15 107-3 1z" fill="#8f6330"/><circle cx="62" cy="56" r="27" fill="none" stroke="#9a6e3a" stroke-width="1.600"/><path d="M62 38q9 0 8 11-1 8-4 11v5q10 3 15 8-7 10-19 10T43 73q5-5 15-8v-5q-4-3-4-11 0-11 8-11z" fill="#946935"/></svg></div>
    <div class="app"><svg viewBox="0 0 128 128"><clipPath id="cs"><circle cx="64" cy="64" r="52"/></clipPath><circle cx="64" cy="64" r="54" fill="url(#gSiri)" stroke="url(#gRim)" stroke-width="4"/><g clip-path="url(#cs)"><rect width="128" height="128" fill="url(#gTeal)"/><rect width="128" height="128" fill="url(#gPink)"/><path d="M10 66q16-12 30 2Q54 50 76 56q22 4 42 26v44H10z" fill="#2f8ff0" opacity=".45"/><path d="M12 86Q40 52 72 58q24 2 44 24-22-10-48 8-30 20-56-4z" fill="#35c8d8" opacity=".5"/><path d="M10 92q10-10 22-6 12 2 18 7 12-16 30-17 22-2 32 18-10 14-30 16-20-2-32-16-18 14-40-2z" fill="#c5f7ff" opacity=".85"/><path d="M10 62q20-4 36 22 14 24 30 34" fill="none" stroke="#e9a6ff" stroke-width="2" opacity=".8"/><path d="M20 92q40-50 92-14" fill="none" stroke="#6dffe2" stroke-width="2" opacity=".6"/></g></svg></div>
    <div class="app"><svg viewBox="0 0 128 128"><path d="M9 28l92-14 15 89-93 14z" fill="#5f727b"/><path d="M13 21L95 9l14 88-83 14z" fill="#fafafa"/><path d="M13 21L95 9l4 26-82 12z" fill="#e4504b"/><path d="M24 106l84-14 1 5-83 14z" fill="#cfcdc8"/><text transform="translate(58 36) rotate(-8.500)" text-anchor="middle" font-family="Roboto" font-size="22" fill="#fff">JUL</text><text transform="translate(66 91) rotate(-7)" text-anchor="middle" font-family="Roboto" font-weight="300" font-size="60" fill="#222">5</text></svg></div>
    <div class="app on"><svg viewBox="0 0 128 128"><circle cx="64" cy="64" r="58.500" fill="#25a05c"/><path d="M14.500 33a58.500 58.500 0 0 1 101.500 4H64a27 27 0 0 0-23.500 40z" fill="#db4a40"/><path d="M115.500 37A58.500 58.500 0 0 1 62 122.500L87.500 77.500A27 27 0 0 0 64 37z" fill="#fecb49"/><circle cx="64" cy="64" r="26.500" fill="#fff"/><circle cx="64" cy="64" r="21.500" fill="#4c8bf4"/></svg></div>
    <div class="app"><svg viewBox="0 0 128 128"><rect x="9" y="12" width="110" height="103" rx="4" fill="url(#gSteel)"/><circle cx="64" cy="64" r="45" fill="#2f2f30"/><circle cx="64" cy="64" r="36" fill="none" stroke="#a9a8a6" stroke-width="6" stroke-dasharray="3.900 3.640"/><circle cx="64" cy="64" r="30" fill="#3c3c3d" stroke="#9b9a98" stroke-width="6.500"/><path d="M64 64h30M64 64L49 38M64 64L49 90" stroke="#b0afac" stroke-width="7"/><circle cx="64" cy="64" r="5" fill="#8d9092"/></svg></div>
    <div class="app on"><svg viewBox="0 0 128 128"><use href="#rstudio"/></svg></div>
    <div class="app on"><svg viewBox="0 0 128 128"><rect x="10" y="16" width="108" height="95" rx="4" fill="#060606" stroke="#b3bcc2" stroke-width="1.800"/><rect x="17" y="23" width="95" height="81" fill="#2a2a2a"/><text x="22" y="48" font-family="Liberation Mono" font-weight="700" font-size="30" fill="#fff">&gt;_</text></svg></div>
    <div class="app"><svg viewBox="0 0 128 128"><circle cx="64" cy="64" r="63.500" fill="url(#gGlobe)"/><g fill="none" stroke="#66fb6e" stroke-width="3"><ellipse cx="63" cy="22" rx="30" ry="15"/><ellipse cx="63" cy="16" rx="10" ry="5"/><circle cx="64" cy="64" r="58"/><path d="M18 45q45 20 92 0M8 66q55 24 112 0M16 90q50 20 98 0M28 106q36 14 72 0"/></g><path d="M54 32q14-8 14 2l-4 20q-5-8-10-22zM16 38q16-16 26-12l-2 20-12 10 6 18-10 10-10-20zM74 28q26-4 40 24l4 18-10-8-8 20-10-10-2-22-16-4zM20 86l20-6 8 16-8 18zM72 84q14-14 26-4l4 18-14 16-12-10z" fill="#66fb6e"/></svg></div>
    <div class="app on"><svg viewBox="0 0 128 128"><path d="M12 4q0-4 4-4h52l47 46v78q0 4-4 4H16q-4 0-4-4z" fill="#3d3c3e"/><path d="M16 4h51l44 45v75H16z" fill="url(#gPage)" stroke="#a9a9a9" stroke-width="1.500"/><path d="M82 0h30q3 0 3 3v30z" fill="#636264"/></svg></div>
    <div class="app on"><svg viewBox="0 0 128 128"><use href="#rstudio"/></svg></div>
    <div class="app on"><svg viewBox="0 0 128 128"><path d="M65 9l55 55-55 55L10 64z" fill="#f3f3f3" stroke="#f3f3f3" stroke-width="7" stroke-linejoin="round"/><g fill="url(#gKodi)" stroke="url(#gKodi)" stroke-width="2" stroke-linejoin="round"><path d="M65 12l20 21-39 37V31z"/><path d="M30 46v36L12 64z"/><path d="M96 43l21 21-21 21-20-21z"/><path d="M65 76l20 20-20 20-20-20z"/></g></svg></div>
    <i class="divider"></i>
    <div class="app"><svg viewBox="0 0 128 128"><path d="M5 20q0-3 3-3h31q2 0 3 2l5 7h73q3 0 3 3v50H5z" fill="#a3dffc"/><path d="M5 34q0-2 2-2h114q2 0 2 2v75q0 3-3 3H8q-3 0-3-3z" fill="url(#gFolder)"/><path d="M5 102h118M5 105.500h118M5 109h118" stroke="#62bde6" stroke-width="1.200"/><circle cx="64" cy="68" r="26.500" fill="#4eaed8"/><path d="M58 54h12v15h9L64 86 50 69h8z" fill="#7dd0f5"/></svg></div>
    <div class="app"><svg viewBox="0 0 128 128"><path d="M19 19l10 84q2 18 35 18t35-18l10-84z" fill="url(#gTrash)"/><ellipse cx="64" cy="19" rx="45" ry="10.500" fill="#b4b4b6" stroke="#eee" stroke-width="1.500"/></svg></div>
  </div>
  <div class="widget"><span class="remaining">aining:</span><span class="countdown">43:01</span></div>
</div>
</body>
</html>
```
FILE: styles.css
```css
* { box-sizing: border-box; }
body { margin: 0; width: 2880px; height: 1800px; overflow: hidden; background: #000; display: flex; flex-direction: column; font-family: "Liberation Sans", Arial, sans-serif; position: relative; }
svg { flex: none; display: block; }
.defs { position: absolute; }
span, b { white-space: nowrap; }

/* macOS menu bar */
.menubar { height: 44px; flex: none; display: flex; align-items: center; padding: 0 46px 0 42px; font: 27px/44px Inter, sans-serif; color: #3f2e31; background: linear-gradient(90deg, #f6dede 0, #f7dfdf 600px, #eedde3 1100px, #fde2da 1620px, #fce3e0 1900px, #f8e2e4 2250px, #e6dfea 2550px, #dbe0f0 2880px); }
.apple { width: 26px; height: 32px; fill: #3f2e31; margin-top: -4px; }
.menus { display: flex; gap: 36.500px; margin: 1px 0 0 40px; letter-spacing: .3px; }
.m1 { letter-spacing: .77px; }
.m6 { letter-spacing: .07px; }
.m8 { letter-spacing: -.07px; }
.status-items { margin-left: auto; display: flex; align-items: center; }
.i-drop { width: 34px; height: 32px; fill: #3e2e31; --gap: #fbe3e3; }
.i-bt { width: 18px; height: 32px; margin-left: 32px; }
.i-wifi { width: 42px; height: 30px; margin-left: 29px; }
.i-air { width: 36px; height: 29px; margin-left: 25px; }
.battery-level { font-size: 23px; margin-left: 25px; width: 50px; letter-spacing: -.7px; }
.i-bat { width: 46px; height: 28px; margin-left: 8px; }
.i-flag { width: 32px; height: 22px; margin-left: 30px; }
.clock { margin: 1px 0 0 38px; color: #33313c; letter-spacing: .25px; }
.i-find { width: 30px; height: 30px; margin-left: 45px; }
.i-list { width: 36px; height: 22px; margin-left: 31px; }

/* Browser window */
.window { margin: 2px 0 0 14px; height: 1594px; flex: none; border-radius: 10px; overflow: hidden; display: flex; flex-direction: column; background: #f2f2f2; }
.tabstrip { height: 74px; flex: none; display: flex; background: #c3c0c0; box-shadow: inset 0 -1.500px #8a8a8a; font: 23.500px/32px Inter, sans-serif; color: #000; }
.lights { display: flex; gap: 16px; padding: 26px 0 0 24px; width: 144px; }
.lights i { width: 24px; height: 24px; border-radius: 50%; }
.red { background: #fc605b; box-shadow: inset 0 0 0 1px #df4744; }
.yellow { background: #fdbc40; box-shadow: inset 0 0 0 1px #dd9f33; }
.green { background: #34c84a; box-shadow: inset 0 0 0 1px #27a934; }
.tabs { display: flex; padding-top: 17px; }
.tab { position: relative; width: 484px; height: 57px; display: flex; align-items: center; padding-left: 32px; z-index: 1; }
.tab + .tab { margin-left: -28px; }
.tab.active { z-index: 3; }
.tab.third { z-index: 2; }
.shape { position: absolute; left: 0; top: 0; width: 484px; height: 57px; z-index: -1; overflow: visible; }
.shape path { fill: #d0d0d0; stroke: #8a8a8a; stroke-width: 1.300; }
.tab:not(.active) .shape { border-bottom: 1.500px solid #8a8a8a; }
.active .shape path { fill: #f2f2f2; }
.fav { width: 32px; height: 32px; }
.label { width: 350px; margin-left: 12px; padding-top: 1px; }
.t1 { letter-spacing: .21px; }
.t3 { letter-spacing: -.2px; }
.label.fade { -webkit-mask-image: linear-gradient(90deg, #000 300px, transparent 350px); mask-image: linear-gradient(90deg, #000 300px, transparent 350px); }
.close { width: 14px; height: 14px; margin-left: 8px; stroke: #4c4c4c; stroke-width: 2.200; }
.newtab { width: 66px; height: 32px; margin: 33px 0 0 -7px; fill: #d0d0d0; stroke: #8a8a8a; stroke-width: 1.300; }
.user { margin: 24px 21px 0 auto; letter-spacing: -.32px; }

.toolbar { height: 63px; flex: none; display: flex; align-items: flex-start; padding-top: 9px; }
.tb { width: 28px; height: 28px; margin-top: 13px; }
.back { margin-left: 22px; }
.fwd { margin-left: 28px; }
.reload { margin-left: 28px; }
.home { margin-left: 28px; }
.omnibox { width: 1880px; height: 54px; margin-left: 23px; border: 1.500px solid #b2b2b2; border-radius: 6px; background: #fff; display: flex; align-items: center; padding-left: 12px; }
.info { width: 28px; height: 28px; }
.url { margin-left: 12px; padding-top: 2px; font: 27px/48px Inter, sans-serif; flex: 1; letter-spacing: .13px; }
.host { color: #000; }
.path { color: #808080; }
.star { width: 30px; height: 28px; margin-right: 12px; }
.exts { display: flex; gap: 24px; margin: 11px 0 0 22px; }
.exts svg { width: 32px; height: 32px; }
.e-drop { fill: #c6c6c6; --gap: #f2f2f2; }

.bookmarks { height: 57px; flex: none; display: flex; gap: 24px; align-items: center; padding-left: 24px; border-bottom: 2px solid #a9a9a9; font: 24px/32px Inter, sans-serif; color: #000; letter-spacing: .25px; }
.bookmarks svg { width: 32px; height: 32px; letter-spacing: 0; }
.bm-text { display: flex; align-items: center; gap: 9px; }
.bm-text span { padding-top: 2px; }
.bookmarks .chev { width: 14px; height: 12px; margin-right: 12px; }
.other { margin-left: auto; margin-right: 17px; }
.bookmarks .other svg + svg { height: 26px; }

/* Page */
.viewport { flex: 1; display: flex; min-height: 0; background: #fff; }
.page { width: 2836px; display: flex; flex-direction: column; }
.scrollbar { width: 30px; background: #fafafa; border-left: 3px solid #e8e8e8; padding: 14px 0 0 5px; }
.scrollbar i { display: block; width: 16px; height: 34px; border-radius: 8px; background: #c1c1c1; }

.navbar { height: 62px; flex: none; background: #122340; border-bottom: 2px solid #0b1730; display: flex; align-items: center; font-size: 30px; line-height: 60px; color: #dadada; padding-left: 50px; }
.jlogo { width: 32px; height: 32px; }
.nav-items { display: flex; gap: 40px; margin-left: 48px; letter-spacing: .35px; }
.nav-items a { display: flex; align-items: center; gap: 12px; }
.nav-items .users { letter-spacing: -.07px; }
.nav-items .tight { letter-spacing: .03px; }
.caret { width: 16px; height: 8px; background: #dadada; clip-path: polygon(0 0, 100% 0, 50% 100%); margin-top: 4px; }
.nav-right { margin-left: auto; display: flex; align-items: center; margin-right: 40px; letter-spacing: .17px; }
.nx { width: 20px; height: 20px; margin-left: 10px; }
.gear { width: 26px; height: 27px; margin: -6px 20px 0 52px; }

.subhead { height: 86px; flex: none; background: #f5f5f5; border-bottom: 2px solid #e2e2e2; display: flex; justify-content: flex-end; padding: 16px 40px 0; }
.help { width: 134px; height: 48px; padding: 0 0 0 21px; border: 2px solid #b8b8b8; border-bottom-color: #a2a2a2; border-radius: 7px; background: linear-gradient(#fff, #e6e6e6); display: flex; align-items: center; gap: 14px; font: 24px/40px "Liberation Sans", Arial, sans-serif; letter-spacing: .4px; color: #333; box-shadow: 0 2px 4px rgba(0,0,0,.06); }
.help svg { width: 24px; height: 24px; margin-top: -4px; letter-spacing: 0; }

.content { flex: 1; min-height: 0; overflow: hidden; position: relative; padding: 0 40px; }
h1 { margin: -40px 0 72px; height: 104px; background: #f9f9f9; padding: 0 16px; font-size: 51px; line-height: 72px; letter-spacing: .42px; color: #333; }
.info-table { width: 100%; border-collapse: separate; border-spacing: 0; table-layout: fixed; font-size: 26px; line-height: 36px; letter-spacing: .42px; color: #333; }
td { padding: 15px 16px 17px; border-top: 2px solid #ddd; vertical-align: top; white-space: nowrap; }
td:first-child { width: 190px; letter-spacing: .22px; }
tr:nth-child(odd) td { background: #f9f9f9; }
.plain { letter-spacing: .03px; }
.sys { letter-spacing: .07px; }
.c1 { letter-spacing: .592px; }
.c2 { letter-spacing: .673px; }
.c3 { letter-spacing: .736px; }
.c4 { letter-spacing: .718px; }
.c5 { letter-spacing: .658px; }
.c6 { letter-spacing: .642px; }
.c7 { letter-spacing: .4px; }
.bottom-fade { position: absolute; left: 0; right: 0; bottom: 0; height: 50px; background: linear-gradient(rgba(255,255,255,0), rgba(252,252,252,.75)); }

.statusbar { height: 60px; flex: none; border-top: 2px solid #ccc; box-shadow: inset 0 2px #f8f8f8; background: linear-gradient(#e9e9e9, #d9d9d9); display: flex; align-items: center; font-size: 24px; line-height: 36px; letter-spacing: .25px; color: #555; padding: 6px 20px 0 30px; }
.sx { width: 22px; height: 22px; margin: -4px 18px 0 0; }
.s1 { letter-spacing: 0; }
.pill { width: 48px; height: 36px; border-radius: 18px; background: #949494; color: #fff; text-align: center; font-size: 22px; letter-spacing: 0; text-shadow: 0 -1px rgba(0,0,0,.4); }
.p1 { margin: 0 6px 0 20px; }
.p2 { margin: 0 7px 0 8px; }
.mail { width: 26px; height: 16px; margin: -6px 15px 0 9px; }
.minus { width: 24px; height: 7px; background: #555; margin: -5px 15px 0 11px; border-radius: 1px; }
.copy { margin-left: auto; display: flex; gap: 16px; }
.ver { letter-spacing: .1px; }
.dash { font-size: 18px; }

/* Dock */
.desktop { flex: 1; display: flex; padding-left: 178px; background: linear-gradient(90deg, #02090c, #000 60px); }
.dock { width: 2524px; flex: none; height: 160px; background: #4f4c4f; border-top-right-radius: 12px; border-top-left-radius: 12px; display: flex; gap: 8px; padding: 12px 12px 0; }
.app { width: 128px; height: 148px; display: flex; flex-direction: column; align-items: center; }
.app svg { width: 128px; height: 128px; filter: drop-shadow(0 1px 2px rgba(0,0,0,.35)); }
.app.on::after { content: ""; width: 8px; height: 8px; border-radius: 50%; background: #000; margin-top: 8px; }
.divider { width: 2px; height: 120px; background: #2c2a2c; margin: 8px 24px 0 26px; }
.widget { flex: 1; display: flex; flex-direction: column; align-items: flex-end; padding: 16px 30px 0 0; font: 300 48px/62px "Open Sans", sans-serif; }
.remaining { color: #06181f; letter-spacing: .4px; }
.countdown { color: #262626; margin-right: 4px; font-size: 43px; line-height: 64px; }
```
